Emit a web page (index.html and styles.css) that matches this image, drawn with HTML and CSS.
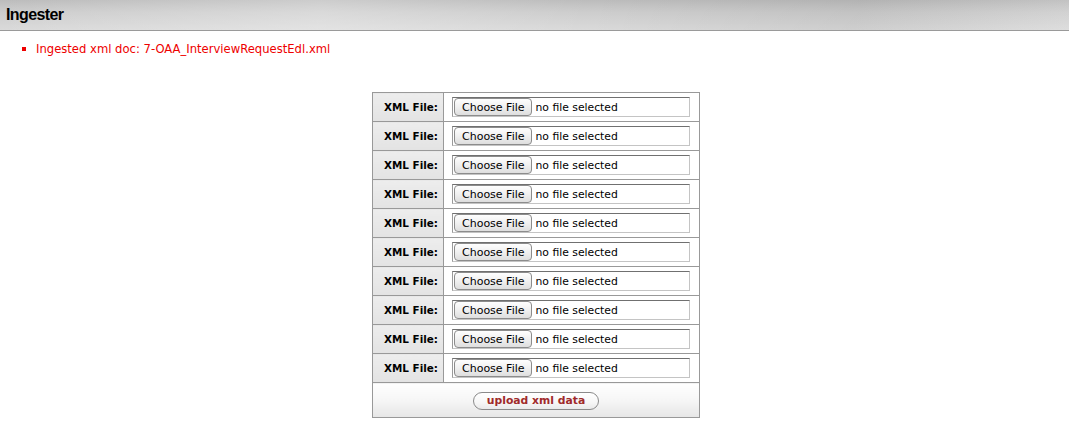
FILE: index.html
```html
<!DOCTYPE html>
<html>
<head>
<meta charset="utf-8">
<title>Ingester</title>
<link rel="stylesheet" href="styles.css">
</head>
<body>
<header class="topbar"><h1 class="title">Ingester</h1></header>
<ul class="messages">
  <li class="message"><span class="bullet"></span><span>Ingested xml doc: 7-OAA_InterviewRequestEdl.xml</span></li>
</ul>
<div class="form-wrap">
  <table class="ingest">
    <tbody>
      <tr><th class="label">XML File:</th><td class="field"><div class="file"><span class="choose">Choose File</span><span class="status">no file selected</span></div></td></tr>
      <tr><th class="label">XML File:</th><td class="field"><div class="file"><span class="choose">Choose File</span><span class="status">no file selected</span></div></td></tr>
      <tr><th class="label">XML File:</th><td class="field"><div class="file"><span class="choose">Choose File</span><span class="status">no file selected</span></div></td></tr>
      <tr><th class="label">XML File:</th><td class="field"><div class="file"><span class="choose">Choose File</span><span class="status">no file selected</span></div></td></tr>
      <tr><th class="label">XML File:</th><td class="field"><div class="file"><span class="choose">Choose File</span><span class="status">no file selected</span></div></td></tr>
      <tr><th class="label">XML File:</th><td class="field"><div class="file"><span class="choose">Choose File</span><span class="status">no file selected</span></div></td></tr>
      <tr><th class="label">XML File:</th><td class="field"><div class="file"><span class="choose">Choose File</span><span class="status">no file selected</span></div></td></tr>
      <tr><th class="label">XML File:</th><td class="field"><div class="file"><span class="choose">Choose File</span><span class="status">no file selected</span></div></td></tr>
      <tr><th class="label">XML File:</th><td class="field"><div class="file"><span class="choose">Choose File</span><span class="status">no file selected</span></div></td></tr>
      <tr><th class="label">XML File:</th><td class="field"><div class="file"><span class="choose">Choose File</span><span class="status">no file selected</span></div></td></tr>
      <tr><td class="actions" colspan="2"><button class="upload" type="button">upload xml data</button></td></tr>
    </tbody>
  </table>
</div>
</body>
</html>
```
FILE: styles.css
```css
html, body {
  margin: 0;
  padding: 0;
  background: #fff;
}
body {
  font-family: "DejaVu Sans", Verdana, sans-serif;
  font-size: 11px;
  color: #000;
}
.topbar {
  height: 30px;
  border-bottom: 1px solid #9a9a9a;
  background:
    linear-gradient(100deg, rgba(255,255,255,0) 0%, rgba(255,255,255,0.25) 30%, rgba(255,255,255,0) 55%, rgba(0,0,0,0.05) 80%, rgba(255,255,255,0.1) 100%),
    linear-gradient(to bottom, #bcbcbc 0%, #cdcdcd 40%, #dadada 100%);
  display: flex;
  align-items: center;
}
.title {
  margin: 0 0 0 6px;
  font-family: "Liberation Sans", Arial, sans-serif;
  font-weight: bold;
  font-size: 16px;
  color: #000;
  letter-spacing: -0.6px;
}
.messages {
  list-style: none;
  margin: 0;
  padding: 11px 0 0 22px;
}
.message {
  display: flex;
  align-items: center;
  gap: 10px;
  color: #ee0000;
  font-size: 11.6px;
  line-height: 14px;
}
.bullet {
  width: 4px;
  height: 4px;
  background: #ee0000;
  flex: none;
}
.form-wrap {
  display: flex;
  justify-content: center;
  padding-top: 36px;
  padding-left: 3px;
}
.ingest {
  border-collapse: collapse;
  border: 1px solid #999;
}
.ingest td, .ingest th {
  border: 1px solid #999;
  padding: 0;
}
.label {
  width: 71px;
  height: 29px;
  box-sizing: border-box;
  background: linear-gradient(to bottom, #ededed, #e3e3e3);
  text-align: right;
  padding: 0 5px 0 0 !important;
  font-weight: bold;
  font-size: 10.4px;
  white-space: nowrap;
}
.field {
  width: 256px;
  height: 29px;
  box-sizing: border-box;
  background: #fff;
  padding: 0 9px 0 8px !important;
}
.file {
  width: 238px;
  height: 20px;
  box-sizing: border-box;
  border: 1px solid #c4c4c4;
  border-top-color: #707070;
  border-left-color: #9a9a9a;
  display: flex;
  align-items: center;
  gap: 4px;
  padding-left: 1px;
}
.choose {
  height: 18px;
  box-sizing: border-box;
  padding: 0 6px 0 7px;
  border: 1px solid #8c8c8c;
  border-radius: 4px;
  background: linear-gradient(to bottom, #fefefe, #f0f0f0 50%, #dedede);
  display: flex;
  align-items: center;
  font-size: 11px;
  color: #000;
  white-space: nowrap;
}
.status {
  font-size: 10.8px;
  color: #000;
  white-space: nowrap;
}
.actions {
  height: 35px;
  box-sizing: border-box;
  text-align: center;
  background: linear-gradient(to bottom, #ffffff 0%, #f7f7f7 45%, #e6e6e6 100%);
}
.upload {
  width: 126px;
  height: 18px;
  border: 1px solid #8a8a8a;
  border-radius: 9px;
  background: linear-gradient(to bottom, #ffffff, #f6f6f6 60%, #e9e9e9);
  font-family: "DejaVu Sans", Verdana, sans-serif;
  font-weight: bold;
  font-size: 10.8px;
  color: #a02a2a;
  padding: 0;
  margin-top: 1px;
}
```
